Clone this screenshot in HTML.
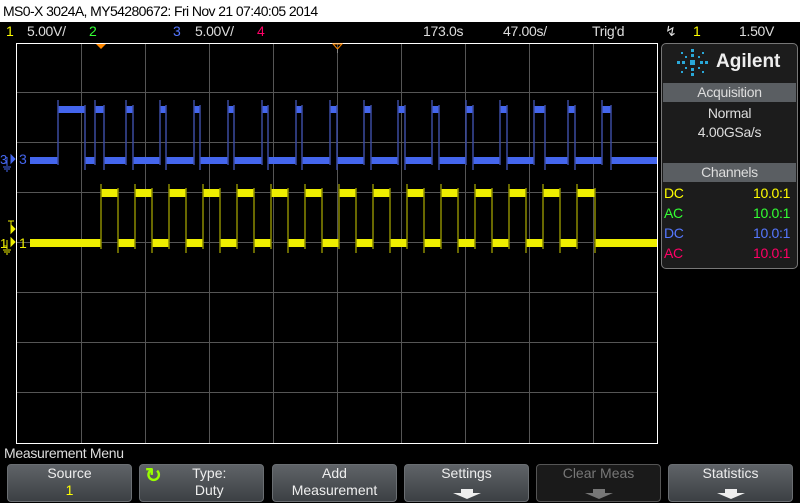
<!DOCTYPE html>
<html><head><meta charset="utf-8"><style>
*{margin:0;padding:0;box-sizing:border-box}
body{width:800px;height:503px;background:#000;overflow:hidden;position:relative;font-family:"Liberation Sans",sans-serif}
.t{position:absolute;white-space:nowrap;font-size:14px;line-height:16px;letter-spacing:-0.3px}
.top{position:absolute;left:0;top:0;width:800px;height:22px;background:#fff}
.btn{position:absolute;top:464px;height:38px;width:125px;border:1px solid #6a6e72;border-radius:4px;background:linear-gradient(#5f6368,#4a4e52 60%,#3c4044);color:#eee;font-size:14px;text-align:center;line-height:17px}
.arrow{position:absolute;left:50%;margin-left:-14px;bottom:2px;width:28px;height:10px}
</style></head><body>
<div class="top"></div>
<div class="t" style="left:3px;top:3px;color:#000;font-size:14px;letter-spacing:-0.6px">MS0-X 3024A, MY54280672: Fri Nov 21 07:40:05 2014</div>
<div class="t" style="left:6px;top:23px;color:#ff0">1</div>
<div class="t" style="left:27px;top:23px;color:#ddd">5.00V/</div>
<div class="t" style="left:89px;top:23px;color:#3f3">2</div>
<div class="t" style="left:173px;top:23px;color:#5577ff">3</div>
<div class="t" style="left:195px;top:23px;color:#ddd">5.00V/</div>
<div class="t" style="left:257px;top:23px;color:#f06">4</div>
<div class="t" style="left:423px;top:23px;color:#ddd">173.0s</div>
<div class="t" style="left:503px;top:23px;color:#ddd">47.00s/</div>
<div class="t" style="left:592px;top:23px;color:#ddd">Trig'd</div>
<div class="t" style="left:665px;top:23px;color:#ddd">&#8623;</div>
<div class="t" style="left:693px;top:23px;color:#ff0">1</div>
<div class="t" style="left:739px;top:23px;color:#ddd">1.50V</div>

<svg style="position:absolute;left:0;top:0" width="800" height="503">
<g stroke="#555" stroke-width="1">
<line x1="81.5" y1="44" x2="81.5" y2="443"/><line x1="145.5" y1="44" x2="145.5" y2="443"/><line x1="209.5" y1="44" x2="209.5" y2="443"/><line x1="273.5" y1="44" x2="273.5" y2="443"/><line x1="337.5" y1="44" x2="337.5" y2="443"/><line x1="401.5" y1="44" x2="401.5" y2="443"/><line x1="465.5" y1="44" x2="465.5" y2="443"/><line x1="529.5" y1="44" x2="529.5" y2="443"/><line x1="593.5" y1="44" x2="593.5" y2="443"/>
<line x1="17" y1="92.5" x2="657" y2="92.5"/><line x1="17" y1="142.5" x2="657" y2="142.5"/><line x1="17" y1="192.5" x2="657" y2="192.5"/><line x1="17" y1="242.5" x2="657" y2="242.5"/><line x1="17" y1="292.5" x2="657" y2="292.5"/><line x1="17" y1="342.5" x2="657" y2="342.5"/><line x1="17" y1="392.5" x2="657" y2="392.5"/>
</g>
<rect x="16.5" y="43.5" width="641" height="400" fill="none" stroke="#fff"/>
<path d="M96 44h10l-5 5z" fill="#f80"/>
<path d="M333 44h9l-4.5 5z" fill="none" stroke="#f80"/><line x1="337.5" y1="49" x2="337.5" y2="53" stroke="#888"/>
<g fill="#4466ee">
<rect x="30" y="157" width="28" height="7"/>
<rect x="58" y="106" width="27" height="7"/>
<rect x="85" y="157" width="10" height="7"/>
<rect x="95" y="106" width="9" height="7"/>
<rect x="104" y="157" width="22" height="7"/>
<rect x="126" y="106" width="7" height="7"/><rect x="133" y="157" width="27" height="7"/>
<rect x="160" y="106" width="6" height="7"/><rect x="166" y="157" width="28" height="7"/>
<rect x="194" y="106" width="6" height="7"/><rect x="200" y="157" width="28" height="7"/>
<rect x="228" y="106" width="6" height="7"/><rect x="234" y="157" width="28" height="7"/>
<rect x="262" y="106" width="6" height="7"/><rect x="268" y="157" width="28" height="7"/>
<rect x="296" y="106" width="6" height="7"/><rect x="302" y="157" width="28" height="7"/>
<rect x="330" y="106" width="7" height="7"/><rect x="337" y="157" width="27" height="7"/>
<rect x="364" y="106" width="7" height="7"/><rect x="371" y="157" width="27" height="7"/>
<rect x="398" y="106" width="7" height="7"/><rect x="405" y="157" width="27" height="7"/>
<rect x="432" y="106" width="7" height="7"/><rect x="439" y="157" width="27" height="7"/>
<rect x="466" y="106" width="7" height="7"/><rect x="473" y="157" width="27" height="7"/>
<rect x="500" y="106" width="7" height="7"/><rect x="507" y="157" width="27" height="7"/>
<rect x="534" y="106" width="11" height="7"/><rect x="545" y="157" width="23" height="7"/>
<rect x="568" y="106" width="7" height="7"/><rect x="575" y="157" width="27" height="7"/>
<rect x="602" y="106" width="9" height="7"/><rect x="611" y="157" width="46" height="7"/>
</g>
<g stroke="#3a4aa0" stroke-width="1.5">
<path d="M58 100v65M85 105v65M95 100v65M104 105v65M126 100v65M133 105v65M160 100v65M166 105v65M194 100v65M200 105v65M228 100v65M234 105v65M262 100v65M268 105v65M296 100v65M302 105v65M330 100v65M337 105v65M364 100v65M371 105v65M398 100v65M405 105v65M432 100v65M439 105v65M466 100v65M473 105v65M500 100v65M507 105v65M534 100v65M545 105v65M568 100v65M575 105v65M602 100v65M611 105v65"/>
</g>
<g fill="#eeee00">
<rect x="30" y="239" width="71" height="8"/>
<rect x="101" y="189" width="17" height="8"/><rect x="118" y="239" width="17" height="8"/>
<rect x="135" y="189" width="17" height="8"/><rect x="152" y="239" width="17" height="8"/>
<rect x="169" y="189" width="17" height="8"/><rect x="186" y="239" width="17" height="8"/>
<rect x="203" y="189" width="17" height="8"/><rect x="220" y="239" width="17" height="8"/>
<rect x="237" y="189" width="17" height="8"/><rect x="254" y="239" width="17" height="8"/>
<rect x="271" y="189" width="17" height="8"/><rect x="288" y="239" width="17" height="8"/>
<rect x="305" y="189" width="17" height="8"/><rect x="322" y="239" width="17" height="8"/>
<rect x="339" y="189" width="17" height="8"/><rect x="356" y="239" width="17" height="8"/>
<rect x="373" y="189" width="17" height="8"/><rect x="390" y="239" width="17" height="8"/>
<rect x="407" y="189" width="17" height="8"/><rect x="424" y="239" width="17" height="8"/>
<rect x="441" y="189" width="17" height="8"/><rect x="458" y="239" width="17" height="8"/>
<rect x="475" y="189" width="17" height="8"/><rect x="492" y="239" width="17" height="8"/>
<rect x="509" y="189" width="17" height="8"/><rect x="526" y="239" width="17" height="8"/>
<rect x="543" y="189" width="17" height="8"/><rect x="560" y="239" width="17" height="8"/>
<rect x="577" y="189" width="18" height="8"/><rect x="595" y="239" width="62" height="8"/>
</g>
<g stroke="#8a8a00" stroke-width="1.5">
<path d="M101 184v65M118 188v65M135 184v65M152 188v65M169 184v65M186 188v65M203 184v65M220 188v65M237 184v65M254 188v65M271 184v65M288 188v65M305 184v65M322 188v65M339 184v65M356 188v65M373 184v65M390 188v65M407 184v65M424 188v65M441 184v65M458 188v65M475 184v65M492 188v65M509 184v65M526 188v65M543 184v65M560 188v65M577 184v65M595 188v65"/>
</g>
<g fill="#4466ee" stroke="#4466ee">
<path d="M11 155l4 4-4 4z"/><path d="M7 157v6h-3M7 163v3M3 167h8M4 169h6M6 171h2" fill="none"/>
</g>
<text x="0" y="164" fill="#4466ee" font-size="13" font-family="Liberation Sans">3</text>
<text x="19" y="164" fill="#4466ee" font-size="14" font-family="Liberation Sans">3</text>
<g fill="#ee0" stroke="#ee0">
<path d="M11 238l4 4-4 4z"/><path d="M8 221h6M11 221v7M11 225l4 4-4 4z"/><path d="M7 240v6h-3M7 246v3M3 250h8M4 252h6M6 254h2" fill="none"/>
</g>
<text x="0" y="248" fill="#ee0" font-size="13" font-family="Liberation Sans">1</text>
<text x="19" y="248" fill="#ee0" font-size="14" font-family="Liberation Sans">1</text>
</svg>

<div style="position:absolute;left:661px;top:43px;width:137px;height:226px;border:1px solid #777;border-radius:5px;background:#1c1c1c"></div>
<svg style="position:absolute;left:676px;top:48px" width="34" height="30">
<g fill="#2aa8d8"><rect x="15" y="1" width="3" height="3"/><rect x="15" y="6" width="3" height="3"/><rect x="15" y="20" width="3" height="3"/><rect x="15" y="25" width="3" height="3"/><rect x="1" y="13" width="3" height="3"/><rect x="6" y="13" width="3" height="3"/><rect x="24" y="13" width="3" height="3"/><rect x="29" y="13" width="3" height="3"/><rect x="5" y="4" width="2" height="2"/><rect x="9" y="8" width="2" height="2"/><rect x="22" y="8" width="2" height="2"/><rect x="26" y="4" width="2" height="2"/><rect x="5" y="23" width="2" height="2"/><rect x="9" y="19" width="2" height="2"/><rect x="22" y="19" width="2" height="2"/><rect x="26" y="23" width="2" height="2"/><rect x="14" y="12" width="5" height="5"/></g>
</svg>
<div class="t" style="left:716px;top:52px;color:#eee;font-size:19px;font-weight:bold;line-height:20px;letter-spacing:0">Agilent</div>
<div style="position:absolute;left:663px;top:83px;width:133px;height:19px;background:#5a5e62"></div>
<div class="t" style="left:663px;top:84px;width:133px;text-align:center;color:#ddd">Acquisition</div>
<div class="t" style="left:663px;top:105px;width:133px;text-align:center;color:#ddd">Normal</div>
<div class="t" style="left:663px;top:124px;width:133px;text-align:center;color:#ddd">4.00GSa/s</div>
<div style="position:absolute;left:663px;top:163px;width:133px;height:19px;background:#5a5e62"></div>
<div class="t" style="left:663px;top:164px;width:133px;text-align:center;color:#ddd">Channels</div>
<div class="t" style="left:664px;top:185px;color:#ff0">DC</div><div class="t" style="left:753px;top:185px;color:#ff0">10.0:1</div>
<div class="t" style="left:664px;top:205px;color:#3f3">AC</div><div class="t" style="left:753px;top:205px;color:#3f3">10.0:1</div>
<div class="t" style="left:664px;top:225px;color:#5577ff">DC</div><div class="t" style="left:753px;top:225px;color:#5577ff">10.0:1</div>
<div class="t" style="left:664px;top:245px;color:#f06">AC</div><div class="t" style="left:753px;top:245px;color:#f06">10.0:1</div>

<div class="t" style="left:4px;top:445px;color:#ddd">Measurement Menu</div>
<div class="btn" style="left:7px">Source<br><span style="color:#ff0">1</span></div>
<div class="btn" style="left:139px">&nbsp;&nbsp;&nbsp;&nbsp;Type:<br>&nbsp;&nbsp;&nbsp;&nbsp;Duty<span style="position:absolute;left:5px;top:3px;color:#9f0;font-size:20px;font-weight:bold">&#8635;</span></div>
<div class="btn" style="left:272px">Add<br>Measurement</div>
<div class="btn" style="left:404px">Settings<svg class="arrow"><path d="M8 0h12v4h8l-14 6L0 4h8z" fill="#eee"/></svg></div>
<div class="btn" style="left:536px;background:#1a1a1a;border-color:#555;color:#777">Clear Meas<svg class="arrow"><path d="M8 0h12v4h8l-14 6L0 4h8z" fill="#777"/></svg></div>
<div class="btn" style="left:668px">Statistics<svg class="arrow"><path d="M8 0h12v4h8l-14 6L0 4h8z" fill="#eee"/></svg></div>
</body></html>
